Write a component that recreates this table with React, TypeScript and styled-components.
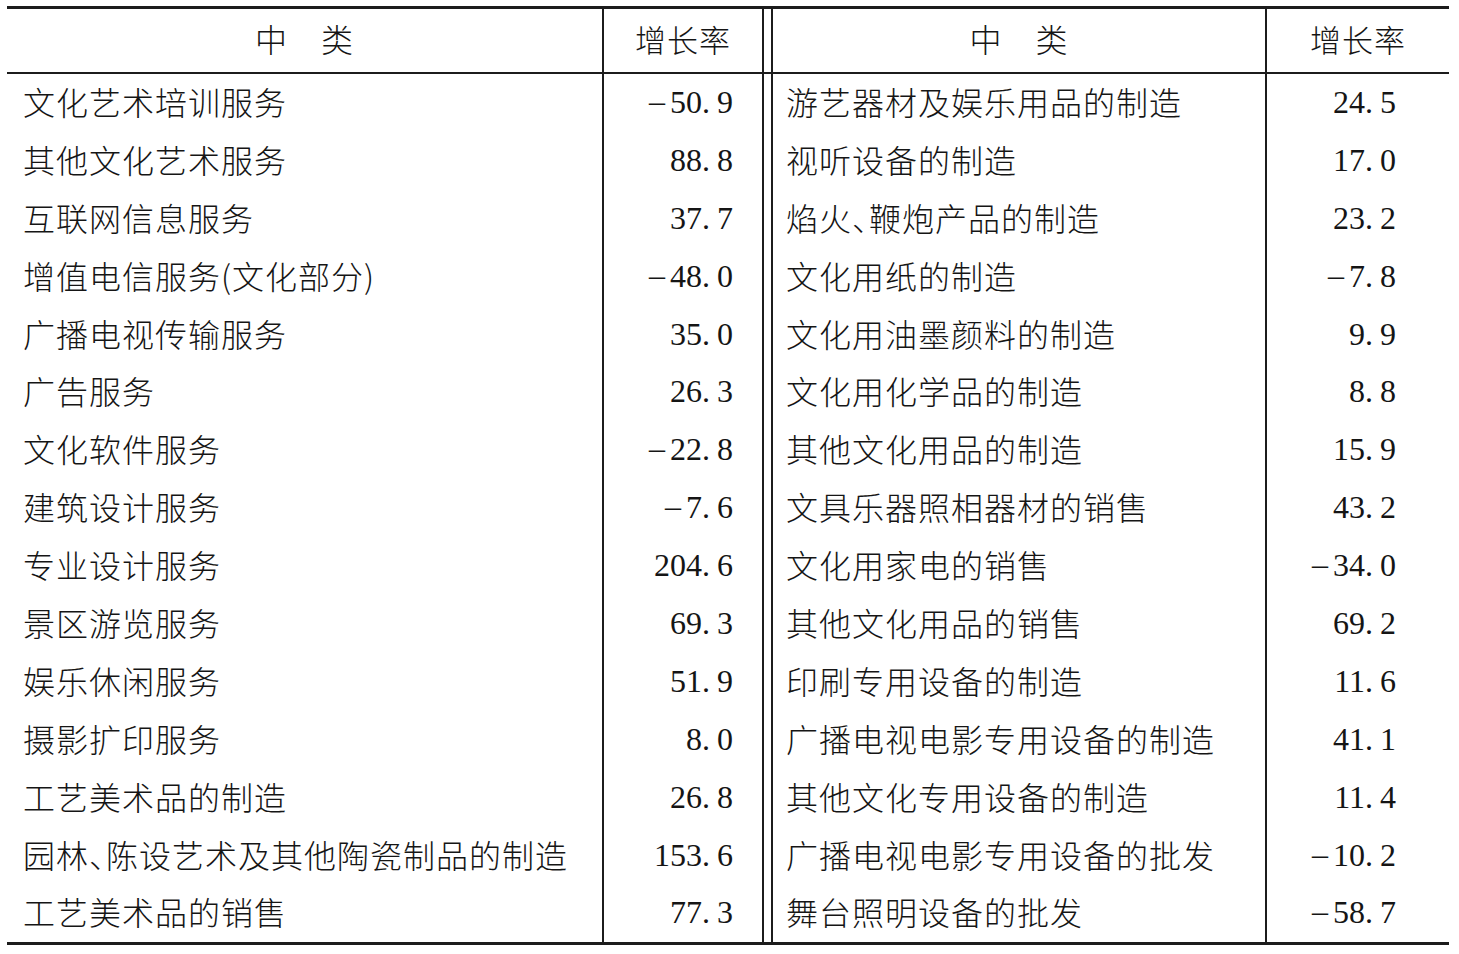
import React from "react";
import styled, { createGlobalStyle } from "styled-components";

const GlobalStyle = createGlobalStyle`
  html, body { margin: 0; padding: 0; background: #ffffff; }
  body { color: #151515; }
`;

const Page = styled.div`
  padding: 6px 10px 9px 7px;
  width: 1442px;
`;

const Table = styled.div`
  border-top: 3px solid #1c1c1c;
  border-bottom: 3px solid #1c1c1c;
  display: flex;
  flex-direction: column;
`;

const Row = styled.div<{ $header?: boolean }>`
  display: grid;
  grid-template-columns: 597px 160px 9px 494px 182px;
  height: ${(p) => (p.$header ? "63px" : "57.9px")};
  ${(p) => (p.$header ? "border-bottom: 2px solid #1c1c1c;" : "")}
  box-sizing: content-box;
`;

const LabelCell = styled.div<{ $align?: "left" | "center"; $pad: number }>`
  display: flex;
  align-items: center;
  justify-content: ${(p) => (p.$align === "center" ? "center" : "flex-start")};
  padding-left: ${(p) => p.$pad}px;
  padding-bottom: ${(p) => (p.$align === "center" ? 5 : 4)}px;
  border-right: 2px solid #1c1c1c;
  font-family: "Noto Sans CJK SC", sans-serif;
  font-weight: 300;
  font-size: 32px;
  letter-spacing: 1px;
  font-feature-settings: "halt";
  white-space: nowrap;
  overflow: hidden;
  color: #151515;
`;

const ValueCell = styled.div<{ $padRight: number; $divider?: boolean; $header?: boolean }>`
  display: flex;
  align-items: center;
  justify-content: ${(p) => (p.$header ? "center" : "flex-end")};
  padding-right: ${(p) => (p.$header ? 0 : p.$padRight)}px;
  padding-bottom: ${(p) => (p.$header ? 5 : 1)}px;
  ${(p) => (p.$divider ? "border-right: 2px solid #1c1c1c;" : "")}
  font-family: "Liberation Serif", "Noto Sans CJK SC", serif;
  font-size: 32px;
  white-space: nowrap;
  color: #151515;
`;

const HeaderText = styled.span`
  font-family: "Noto Sans CJK SC", sans-serif;
  font-weight: 300;
  font-size: 31px;
  letter-spacing: 1px;
`;

const Gap = styled.div`
  border-right: 2px solid #1c1c1c;
`;

const Minus = styled.span`
  display: inline-block;
  margin-right: 5px;
  transform: translateY(-1px);
`;

const Dot = styled.span`
  margin-right: 7px;
`;

const Num: React.FC<{ value: string }> = ({ value }) => {
  const neg = value.startsWith("-");
  const abs = neg ? value.slice(1) : value;
  const [a, b] = abs.split(".");
  return (
    <span>
      {neg && <Minus>–</Minus>}
      {a}
      <Dot>.</Dot>
      {b}
    </span>
  );
};

const data: [string, string, string, string][] = [
  ["文化艺术培训服务", "-50.9", "游艺器材及娱乐用品的制造", "24.5"],
  ["其他文化艺术服务", "88.8", "视听设备的制造", "17.0"],
  ["互联网信息服务", "37.7", "焰火、鞭炮产品的制造", "23.2"],
  ["增值电信服务(文化部分)", "-48.0", "文化用纸的制造", "-7.8"],
  ["广播电视传输服务", "35.0", "文化用油墨颜料的制造", "9.9"],
  ["广告服务", "26.3", "文化用化学品的制造", "8.8"],
  ["文化软件服务", "-22.8", "其他文化用品的制造", "15.9"],
  ["建筑设计服务", "-7.6", "文具乐器照相器材的销售", "43.2"],
  ["专业设计服务", "204.6", "文化用家电的销售", "-34.0"],
  ["景区游览服务", "69.3", "其他文化用品的销售", "69.2"],
  ["娱乐休闲服务", "51.9", "印刷专用设备的制造", "11.6"],
  ["摄影扩印服务", "8.0", "广播电视电影专用设备的制造", "41.1"],
  ["工艺美术品的制造", "26.8", "其他文化专用设备的制造", "11.4"],
  ["园林、陈设艺术及其他陶瓷制品的制造", "153.6", "广播电视电影专用设备的批发", "-10.2"],
  ["工艺美术品的销售", "77.3", "舞台照明设备的批发", "-58.7"],
];

export default function App() {
  return (
    <>
      <GlobalStyle />
      <Page>
        <Table>
          <Row $header>
            <LabelCell $align="center" $pad={0}>中　类</LabelCell>
            <ValueCell $header $divider $padRight={0}>
              <HeaderText>增长率</HeaderText>
            </ValueCell>
            <Gap />
            <LabelCell $align="center" $pad={0}>中　类</LabelCell>
            <ValueCell $header $padRight={0}>
              <HeaderText>增长率</HeaderText>
            </ValueCell>
          </Row>
          {data.map(([l1, v1, l2, v2], i) => (
            <Row key={i}>
              <LabelCell $pad={16}>{l1}</LabelCell>
              <ValueCell $divider $padRight={29}>
                <Num value={v1} />
              </ValueCell>
              <Gap />
              <LabelCell $pad={13}>{l2}</LabelCell>
              <ValueCell $padRight={53}>
                <Num value={v2} />
              </ValueCell>
            </Row>
          ))}
        </Table>
      </Page>
    </>
  );
}
